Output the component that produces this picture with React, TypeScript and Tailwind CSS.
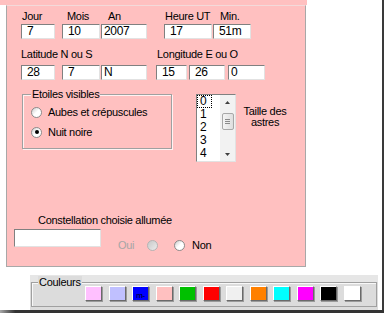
import { FC, ReactNode } from "react";

const Box: FC<{ className: string; value?: string }> = ({ className, value }) => (
  <div
    className={`h-[15px] bg-white border border-t-[#808080] border-l-[#808080] border-r-[#e2e2e2] border-b-[#e2e2e2] text-[12px] leading-[13px] whitespace-nowrap overflow-hidden ${className}`}
  >
    {value}
  </div>
);

const Label: FC<{ className?: string; children: ReactNode }> = ({ className = "", children }) => (
  <div className={`h-[13px] leading-[13px] whitespace-nowrap ${className}`}>{children}</div>
);

const Radio: FC<{ checked?: boolean; disabled?: boolean }> = ({ checked, disabled }) => (
  <span
    className={`w-[11px] h-[11px] shrink-0 rounded-full border flex items-center justify-center ${
      disabled
        ? "border-[#b4b4b4] bg-linear-to-br from-[#c8c8c8] to-[#ececec]"
        : "border-[#8c8c8c] bg-linear-to-br from-[#cdcdcd] via-white to-white"
    }`}
  >
    {checked && <span className="w-[4px] h-[4px] rounded-full bg-black" />}
  </span>
);

const Arrow: FC<{ down?: boolean }> = ({ down }) => (
  <svg width="5" height="3" viewBox="0 0 5 3">
    <path d={down ? "M0 0H5L2.5 3Z" : "M0 3H5L2.5 0Z"} fill="#404040" />
  </svg>
);

const swatches = [
  "bg-[#ffc0ff]",
  "bg-[#c0c0ff]",
  "bg-[#0000ff]",
  "bg-[#ffc0c0]",
  "bg-[#00c000]",
  "bg-[#ff0000]",
  "bg-[#f0f0f0]",
  "bg-[#ff8000]",
  "bg-[#00ffff]",
  "bg-[#ff00ff]",
  "bg-[#000000]",
  "bg-[#ffffff]",
];

const App: FC = () => {
  return (
    <div className="w-[386px] h-[315px] bg-white overflow-hidden text-[11px] text-black font-['Liberation_Sans',Arial,sans-serif] tracking-[-0.3px]">
      <div className="flex">
        <div className="w-[382px] h-[310px] flex flex-col">
          <div className="w-[307px] h-[5px] bg-[#ffc0c0]" />

          {/* pink form panel */}
          <div className="ml-[6px] w-[300px] h-[262px] bg-[#ffc0c0] border border-[#a8a8a8] border-t-[#f3dada] flex flex-col">
            {/* date / time */}
            <div className="flex ml-[14px] pt-[4px]">
              <div className="flex flex-col w-[34px]">
                <Label className="pl-[1px]">Jour</Label>
                <Box className="mt-[1px] w-[34px] pl-[5px]" value="7" />
              </div>
              <div className="flex flex-col w-[38px] ml-[7px]">
                <Label className="pl-[5px]">Mois</Label>
                <Box className="mt-[1px] w-[38px] pl-[5px]" value="10" />
              </div>
              <div className="flex flex-col w-[46px] ml-[1px]">
                <Label className="pl-[7px]">An</Label>
                <Box className="mt-[1px] w-[46px] pl-[2px]" value="2007" />
              </div>
              <div className="flex flex-col w-[48px] ml-[17px]">
                <Label className="pl-[1px]">Heure UT</Label>
                <Box className="mt-[1px] w-[48px] pl-[5px]" value="17" />
              </div>
              <div className="flex flex-col w-[38px] ml-[1px]">
                <Label className="pl-[7px]">Min.</Label>
                <Box className="mt-[1px] w-[38px] pl-[5px]" value="51m" />
              </div>
            </div>

            {/* coordinates */}
            <div className="flex ml-[14px] mt-[9px]">
              <div className="flex flex-col">
                <Label>Latitude N ou S</Label>
                <div className="flex mt-[4px]">
                  <Box className="w-[34px] pl-[5px]" value="28" />
                  <Box className="w-[38px] ml-[7px] pl-[5px]" value="7" />
                  <Box className="w-[46px] ml-[1px] pl-[2px]" value="N" />
                </div>
              </div>
              <div className="flex flex-col ml-[9px]">
                <Label className="pl-[1px]">Longitude E ou O</Label>
                <div className="flex mt-[4px]">
                  <Box className="w-[31px] pl-[5px]" value="15" />
                  <Box className="w-[36px] ml-[2px] pl-[5px]" value="26" />
                  <Box className="w-[37px] ml-[3px] pl-[2px]" value="0" />
                </div>
              </div>
            </div>

            {/* stars */}
            <div className="flex items-start ml-[15px] mt-[14px]">
              <div className="relative w-[150px] h-[55px] border border-[#a0a0a0] shadow-[inset_1px_1px_0_#fff2f2,1px_1px_0_#fff2f2]">
                <span className="absolute -top-[7px] left-[8px] px-[1px] bg-[#ffc0c0] leading-[13px]">
                  Etoiles visibles
                </span>
                <div className="flex flex-col gap-[8px] pl-[8px] pt-[11px]">
                  <div className="flex items-center gap-[6px] h-[12px]">
                    <Radio />
                    <span>Aubes et crépuscules</span>
                  </div>
                  <div className="flex items-center gap-[6px] h-[12px]">
                    <Radio checked />
                    <span>Nuit noire</span>
                  </div>
                </div>
              </div>

              <div className="ml-[24px] w-[40px] h-[68px] bg-white border border-t-[#808080] border-l-[#808080] border-r-[#e2e2e2] border-b-[#e2e2e2] flex">
                <div className="flex-1 flex flex-col text-[12px] leading-[13px] tracking-normal">
                  <span className="w-[15px] h-[13px] pl-[3px] outline outline-1 outline-dotted outline-black -outline-offset-1">
                    0
                  </span>
                  <span className="h-[13px] pl-[3px]">1</span>
                  <span className="h-[13px] pl-[3px]">2</span>
                  <span className="h-[13px] pl-[3px]">3</span>
                  <span className="h-[13px] pl-[3px]">4</span>
                </div>
                <div className="w-[15px] bg-[#f2f2f2] flex flex-col items-center">
                  <div className="h-[14px] flex items-center justify-center">
                    <Arrow />
                  </div>
                  <div className="mt-[4px] w-[12px] h-[17px] rounded-[2px] border border-[#a8a8a8] bg-linear-to-r from-[#f4f4f4] to-[#dedede] flex flex-col items-center justify-center gap-[1px]">
                    <span className="w-[5px] h-[1px] bg-[#8a8a8a]" />
                    <span className="w-[5px] h-[1px] bg-[#8a8a8a]" />
                    <span className="w-[5px] h-[1px] bg-[#8a8a8a]" />
                  </div>
                  <div className="mt-auto h-[14px] flex items-center justify-center">
                    <Arrow down />
                  </div>
                </div>
              </div>

              <div className="ml-[6px] mt-[12px] w-[46px] text-center leading-[11px]">
                Taille des
                <br />
                astres
              </div>
            </div>

            {/* constellation */}
            <Label className="ml-[31px] mt-[52px]">Constellation choisie allumée</Label>
            <div className="flex items-start mt-[2px]">
              <div className="ml-[7px] w-[87px] h-[18px] bg-white border border-t-[#808080] border-l-[#808080] border-r-[#e2e2e2] border-b-[#e2e2e2]" />
              <div className="flex items-center mt-[8px] ml-[17px]">
                <span className="w-[13px] text-[#a6a6a6]">Oui</span>
                <span className="ml-[16px]">
                  <Radio disabled />
                </span>
                <span className="ml-[16px]">
                  <Radio />
                </span>
                <span className="ml-[7px]">Non</span>
              </div>
            </div>
          </div>

          {/* colour toolbar */}
          <div className="mt-[8px] ml-[30px] w-[348px] h-[35px] bg-[#dcdcdc] flex flex-col">
            <div className="h-[7px] bg-[#e6e6e6]" />
            <div className="mx-[1px] h-[25px] border border-[#a0a0a0] shadow-[inset_1px_1px_0_#f8f8f8] flex items-start pl-[6px]">
              <span className="w-[46px] -mt-[6px] leading-[11px]">
                <span className="px-[1px] bg-[#dcdcdc]">Couleurs</span>
              </span>
              <div className="flex gap-[6.5px] ml-[1px] mt-[3px]">
                {swatches.map((c, i) => (
                  <div
                    key={i}
                    className={`w-[17px] h-[15px] border border-t-white border-l-white border-b-[#6a6a6a] border-r-[#6a6a6a] shadow-[1px_1px_0_#9a9a9a] flex items-end justify-center ${c}`}
                  >
                    {i === 2 && <span className="text-[8px] leading-[9px] text-black">m-</span>}
                  </div>
                ))}
              </div>
            </div>
          </div>
        </div>
        <div className="w-[2px] h-[310px] bg-[#3a3a3a]" />
      </div>
      <div className="w-[384px] h-[3px] bg-linear-to-r from-[#a8a8a8] to-[#333] to-[4%]" />
    </div>
  );
};

export default App;
